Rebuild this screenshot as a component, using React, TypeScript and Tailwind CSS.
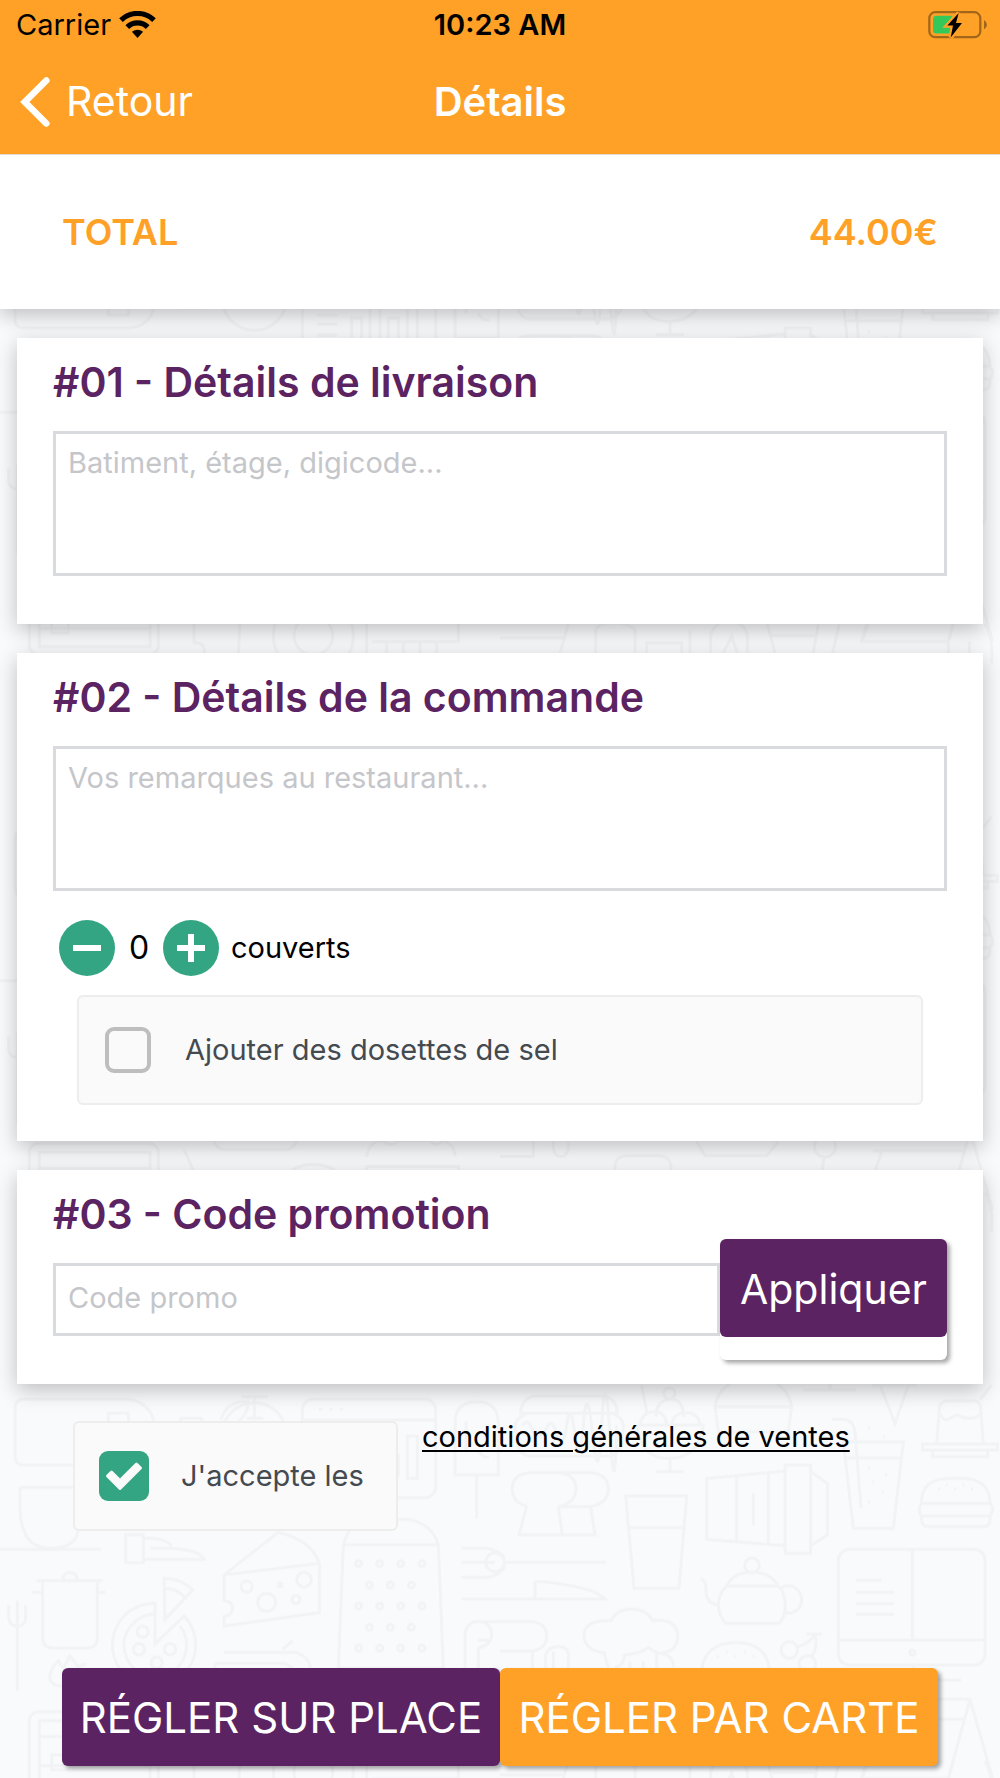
import React, { useState } from 'react';

const DOT_ROWS = [
  { y: 581, xs: [1076, 1139, 1202, 1266] },
  { y: 645, xs: [1108, 1171, 1234] },
  { y: 708, xs: [1076, 1139, 1202, 1266] },
  { y: 772, xs: [1108, 1171, 1234] },
  { y: 834, xs: [1076, 1139, 1202, 1266] },
];

// One tile of the kitchen doodles, left and right halves
function FoodDoodles() {
  return (
    <g fill="none" stroke="#f2f3f5" strokeWidth="9">
      <g transform="translate(0 233) scale(0.33333)">
        <path d="M45 115Q45 87 72 87H385Q450 95 465 165V215Q450 280 390 285H72Q45 285 45 260Z" />
        <path d="M325 130H385V246H325ZM542 145H605V225H542Z" />
        <circle cx="763" cy="195" r="97" />
        <path d="M725 80H803M763 80V150M740 145H790M663 150Q680 90 745 95Q745 130 715 155" />
        <rect x="907" y="87" width="400" height="296" rx="32" />
        <path d="M907 150H1307M950 246H1012M950 274H1012M950 306H1012M1055 320V255H1085V320M1110 198V325M1140 198V325M1165 320V255H1195V320M1222 198H1252V325H1222Z" />
        <path d="M957 118H965M989 118H997M1021 118H1029" />
        <path d="M1365 315V160Q1365 95 1430 95T1495 160V315ZM1430 315V445M1398 155V240M1435 240Q1445 265 1468 260" />
        <path d="M60 352H230M60 352V420Q65 535 150 535T235 470M0 538H303" />
        <path d="M377 495H430V578H377ZM430 505Q490 500 515 527M452 535H515Q600 540 612 568H430" />
        <path d="M672 615L835 487Q935 510 958 580V728L672 768V740Q698 735 698 715T672 692V615L958 580" />
        <circle cx="740" cy="650" r="17" />
        <circle cx="800" cy="697" r="27" />
        <circle cx="912" cy="629" r="22" />
        <circle cx="888" cy="688" r="12" />
        <circle cx="840" cy="645" r="6" />
        <path d="M1015 895L1030 525Q1050 448 1110 448H1230Q1300 465 1315 525L1330 895ZM1030 525H1315" />
        {DOT_ROWS.map((row) =>
          row.xs.map((x) => <circle key={`${x}-${row.y}`} cx={x} cy={row.y} r="9" />)
        )}
        <path d="M128 632V805Q130 834 158 834H263Q292 832 292 805V632M110 632H308M97 667H128M292 667H316M188 632Q188 608 210 608T232 632" />
        <path d="M26 705V740Q26 768 52 768T77 740V705M52 692V962" />
        <path d="M465 700A125 125 0 1 0 552 738L465 822ZM465 732A94 94 0 1 0 540 768" />
        <circle cx="428" cy="785" r="17" />
        <circle cx="417" cy="838" r="17" />
        <circle cx="470" cy="878" r="17" />
        <circle cx="510" cy="838" r="17" />
        <path d="M492 625Q545 625 578 660L495 748ZM492 655Q530 655 555 682" />
        <path d="M185 948Q145 945 150 915Q155 890 175 873L190 895L210 858L235 890L260 880" />
        <path d="M672 848H890Q925 860 932 892M645 880H850Q870 885 880 900M645 880V950M848 838L878 812" />
        <rect x="88" y="1025" width="387" height="240" rx="28" />
        <path d="M118 1052H450V1241H118ZM118 1100H450M118 1187H450M155 1155H205V1200H155Z" />
        <path d="M552 1045L582 1110V1230Q620 1225 612 1270M720 1160L715 1270M640 1008Q645 1040 670 1045H860Q885 1040 895 1008" />
        <circle cx="940" cy="1208" r="58" />
        <circle cx="940" cy="1208" r="120" />
        <path d="M1100 1065Q1110 1015 1150 1018Q1175 1040 1195 1018H1290Q1310 1040 1330 1018Q1365 1030 1365 1065M1100 1270V1095H1375V1226H1115M1160 1226V1270M1210 1226V1270M1260 1226V1270M1310 1226V1270" />
        <path d="M1385 535H1465Q1500 545 1515 565M1385 577H1485M1385 622H1465Q1500 615 1515 590M1385 687H1500" />
        <path d="M1395 895V800Q1395 755 1435 755T1475 800Q1470 825 1435 835V895M1435 755H1600M1435 810H1465" />
      </g>
      <g transform="translate(500 233) scale(0.33333)">
        <path d="M62 130Q65 78 110 78H310Q350 85 352 130ZM62 210Q45 195 45 170T80 130H335Q370 140 370 170T350 210" />
        <path d="M68 165Q85 145 95 175T120 195T145 165T172 195T200 165T225 195T250 165T278 195T305 165T330 195T350 165M50 215Q60 258 90 258H330Q360 250 368 215" />
        <circle cx="508" cy="70" r="17" />
        <path d="M468 140Q470 90 510 88T550 140M420 165Q425 128 460 125T500 165M515 165Q520 128 558 128T600 165M412 165H610Q600 262 510 265T412 165M510 265V305M468 305H552M425 45L440 125" />
        <path d="M645 110Q655 35 760 15Q865 35 875 110ZM645 110L655 185H865L875 110M910 60H1068M990 40V60" />
        <path d="M1140 45L1185 160L1225 45M1115 45H1250" />
        <path d="M1310 220L1318 115Q1320 92 1345 92H1425Q1442 95 1442 115L1450 220M1320 130Q1330 158 1350 145T1380 138T1410 145T1442 130M1440 90L1475 45M1268 222H1492V240H1268ZM1298 240H1463V260H1298Z" />
        <path d="M37 357Q37 312 88 308H180Q228 315 228 357T175 410H272Q325 400 325 357T275 308H180M80 408Q37 398 37 357M80 408L57 495H285L272 410M175 410L187 495" />
        <path d="M377 378H560L537 655H402ZM388 473H553" />
        <path d="M620 325L855 303V527L620 508ZM710 316V515M805 308V522M855 285H932V550H855ZM932 305L982 340V495L932 527M760 368V465" />
        <path d="M1030 215H1210L1180 475H1060ZM1040 263H1202M995 148H1030Q1060 150 1065 185L1083 415" />
        <path d="M1104 295H1110M1155 315H1161M1115 335H1121M1145 365H1151M1104 395H1110M1104 175H1110M1150 200H1156" />
        <path d="M1265 400Q1262 328 1345 325H1395Q1470 330 1470 400ZM1265 400Q1250 418 1265 438H1470Q1485 418 1470 400M1265 438V450Q1265 470 1285 470H1450Q1470 470 1470 450V438" />
        <path d="M1315 357H1321M1337 345H1343M1363 357H1369M1387 345H1393M1413 357H1419" />
        <circle cx="-15" cy="577" r="28" />
        <path d="M15 577H318M0 687H315Q290 660 200 645T105 638V687" />
        <path d="M0 755H95Q140 760 140 798T95 843H0M97 843V895M137 895V855Q145 830 175 830T205 855V895M160 895V845" />
        <path d="M325 892Q315 860 312 848Q252 840 252 795T333 752Q350 717 395 717T458 752Q533 745 533 797T475 850L445 833Q425 850 372 855Q375 885 345 892M475 850Q520 850 520 892M390 875V895M430 875V895M470 850V895" />
        <circle cx="756" cy="586" r="22" />
        <path d="M680 648Q700 606 756 606T835 648ZM680 648Q655 670 655 710Q660 745 678 760H838Q855 740 856 710Q855 665 835 648M840 655Q860 642 880 650Q905 665 905 690T880 727Q865 732 852 725M602 627Q618 630 618 655Q615 700 655 705" />
        <path d="M605 895Q620 818 708 818T808 895M650 860H656M677 845H683M703 860H709M732 845H738M758 860H764" />
        <circle cx="868" cy="840" r="25" />
        <circle cx="922" cy="882" r="25" />
        <path d="M893 830Q930 820 945 792M920 792H965M945 792Q955 830 935 860" />
        <rect x="1015" y="538" width="440" height="347" rx="32" />
        <path d="M1237 538V810M1015 810H1455M1068 631H1145M1068 667H1182M1068 701H1182M1068 733H1182" />
        <circle cx="1237" cy="848" r="8" />
        <path d="M1240 885V930M1090 930H1383M1120 988H1410L1345 1225M1410 988L1478 1225M1120 1048H1395M1145 1050L1090 1215" />
        <path d="M0 1065H100V1020M160 1020V1040Q165 1065 183 1065T205 1040V1020M590 1020L615 1063H800L835 1020M345 1120V1090Q350 1063 380 1063H480Q510 1066 513 1095V1120" />
        <circle cx="975" cy="1035" r="32" />
        <path d="M972 1067L965 1120" />
        <path d="M0 1215H190M205 1173L180 1260M287 1260V1190Q300 1168 345 1170T405 1190V1260M440 1260V1230H545V1260M570 1260V1190M632 1260V1205Q645 1165 688 1165T742 1205V1260M670 1260L695 1210L712 1260M802 1173L825 1260M815 1208H945M955 1173L940 1260M1018 1173L998 1260M1100 1173L1085 1225H1345L1360 1173M1345 1225V1260M1408 1225V1260M1455 1173Q1480 1215 1475 1290" />
      </g>
    </g>
  );
}

function Background() {
  return (
    <svg className="absolute inset-0 -z-10 h-full w-full" aria-hidden="true">
      <defs>
        <pattern id="doodles" width="1000" height="568.5" patternUnits="userSpaceOnUse">
          <FoodDoodles />
          <g transform="translate(0 -568.5)">
            <FoodDoodles />
          </g>
        </pattern>
      </defs>
      <rect width="100%" height="100%" fill="#f9fafc" />
      <rect width="100%" height="100%" fill="url(#doodles)" />
    </svg>
  );
}

function WifiIcon() {
  return (
    <svg width="37" height="28" viewBox="0 0 37 28" fill="none" stroke="#000" strokeWidth="5.2" aria-hidden="true">
      <path d="M2 9.2A23.6 23.6 0 0 1 35 9.2" />
      <path d="M8.3 16.1A14.4 14.4 0 0 1 28.7 16.1" />
      <path d="M12.9 20.8Q18.5 16.8 24.1 20.8L18.5 27Z" fill="#000" stroke="none" />
    </svg>
  );
}

function BatteryIcon() {
  return (
    <svg width="60" height="28" viewBox="0 0 60 28" aria-hidden="true">
      <rect x="1.3" y="1.2" width="51" height="25" rx="6" fill="none" stroke="#a1661a" strokeWidth="2.2" />
      <path d="M56 9Q59 11 59 13.8T56 18.5Z" fill="#a1661a" />
      <rect x="5" y="4.8" width="21" height="17.8" rx="3.5" fill="#34c759" />
      <path d="M30.7 2L19.3 14.6H25L22.7 26.5L34 12H28Z" fill="#ffa126" stroke="#ffa126" strokeWidth="4.5" />
      <path d="M30.7 2L19.3 14.6H25L22.7 26.5L34 12H28Z" fill="#000" />
    </svg>
  );
}

interface CardProps {
  title: string;
  className?: string;
  children: React.ReactNode;
}

function Card({ title, className = '', children }: CardProps) {
  return (
    <section className={`bg-white px-9 pt-5 shadow-[0_6px_20px_rgba(0,0,0,0.24)] ${className}`}>
      <h2 className="mb-[25px] text-[41px] leading-[48px] font-semibold text-[#5c2362]">{title}</h2>
      {children}
    </section>
  );
}

interface CheckProps {
  label: string;
  checked: boolean;
  onChange: (value: boolean) => void;
}

function Check({ label, checked, onChange }: CheckProps) {
  return (
    <label className="flex h-[110px] cursor-pointer items-center gap-8 rounded-md border-2 border-[#ededed] bg-[#fafafa] px-6 text-[29px] text-[#444a50]">
      <span className="relative flex size-[50px] items-center justify-center">
        <input
          type="checkbox"
          checked={checked}
          onChange={(e) => onChange(e.target.checked)}
          className="size-[46px] appearance-none rounded-[9px] border-4 border-[#bebebe] checked:size-[50px] checked:border-0 checked:bg-[#33a583]"
        />
        {checked && (
          <svg className="pointer-events-none absolute inset-0" viewBox="0 0 50 50" aria-hidden="true">
            <path
              d="M8.5 25L12.5 21L21 29.5L37.5 13L41.5 17L21 37.5Z"
              fill="#fafafa"
              stroke="#fafafa"
              strokeWidth="3"
              strokeLinejoin="round"
            />
          </svg>
        )}
      </span>
      {label}
    </label>
  );
}

const fieldClass =
  'block w-full resize-none border-[3px] border-[#d9dade] bg-white px-3 text-[29px] leading-9 text-black placeholder:text-[#c5c6ca] outline-none';

export default function App() {
  const [covers, setCovers] = useState(0);
  const [salt, setSalt] = useState(false);
  const [accepted, setAccepted] = useState(true);

  return (
    <div className="relative isolate flex min-h-screen flex-col font-['Inter',sans-serif] text-black">
      <Background />

      <header className="relative z-10 border-b border-[#e0dcd6] bg-[#ffa126]">
        <div className="grid h-[50px] grid-cols-3 items-center px-4 text-[29px]">
          <div className="flex items-center gap-2">
            Carrier <WifiIcon />
          </div>
          <div className="text-center font-semibold">10:23 AM</div>
          <div className="-mr-1 flex justify-end">
            <BatteryIcon />
          </div>
        </div>
        <div className="grid h-[104px] grid-cols-3 items-center px-5 text-[41px] text-white">
          <button type="button" className="flex items-center gap-4">
            <svg width="30" height="50" viewBox="0 0 30 50" fill="none" aria-hidden="true">
              <path d="M26.3 3.5L4.8 25L26.3 46.5" stroke="#fff" strokeWidth="6.6" strokeLinecap="round" />
            </svg>
            Retour
          </button>
          <h1 className="text-center text-[40px] font-semibold">Détails</h1>
        </div>
      </header>

      <div className="flex h-[154px] items-center justify-between bg-white px-[62px] text-[36px] font-semibold text-[#ffa126] shadow-[0_6px_20px_rgba(0,0,0,0.24)]">
        <span>TOTAL</span>
        <span>44.00€</span>
      </div>

      <main className="mt-[29px] flex flex-col gap-[29px] px-[17px]">
        <Card title="#01 - Détails de livraison" className="pb-12">
          <textarea aria-label="Détails de livraison" placeholder="Batiment, étage, digicode..." className={`${fieldClass} h-[145px] pt-[11px]`} />
        </Card>

        <Card title="#02 - Détails de la commande" className="pb-9">
          <textarea aria-label="Détails de la commande" placeholder="Vos remarques au restaurant..." className={`${fieldClass} h-[145px] pt-[11px]`} />
          <div className="mt-[29px] mb-[19px] flex items-center px-1.5">
            <button
              type="button"
              aria-label="Moins"
              onClick={() => setCovers(Math.max(0, covers - 1))}
              className="flex size-14 items-center justify-center rounded-full bg-[#33a583]"
            >
              <svg width="30" height="30" viewBox="0 0 30 30" stroke="#fff" strokeWidth="6" aria-hidden="true">
                <path d="M1 15H29" />
              </svg>
            </button>
            <span className="w-12 text-center text-[32px]">{covers}</span>
            <button
              type="button"
              aria-label="Plus"
              onClick={() => setCovers(covers + 1)}
              className="flex size-14 items-center justify-center rounded-full bg-[#33a583]"
            >
              <svg width="30" height="30" viewBox="0 0 30 30" stroke="#fff" strokeWidth="6" aria-hidden="true">
                <path d="M1 15H29M15 1V29" />
              </svg>
            </button>
            <span className="ml-3 text-[29px]">couverts</span>
          </div>
          <div className="px-6">
            <Check label="Ajouter des dosettes de sel" checked={salt} onChange={setSalt} />
          </div>
        </Card>

        <Card title="#03 - Code promotion" className="pb-6">
          <div className="flex items-start">
            <input type="text" aria-label="Code promotion" placeholder="Code promo" className={`${fieldClass} h-[73px] min-w-0 flex-1 pb-1`} />
            <div className="-mt-6 rounded-md bg-white pb-[23px] shadow-[3px_3px_4px_rgba(0,0,0,0.35)]">
              <button type="button" className="h-[98px] w-[227px] rounded-md bg-[#5c2362] pt-1 text-[41px] text-white">
                Appliquer
              </button>
            </div>
          </div>
        </Card>
      </main>

      <div className="mt-[37px] flex items-start gap-6 px-[73px]">
        <div className="w-[325px]">
          <Check label="J'accepte les" checked={accepted} onChange={setAccepted} />
        </div>
        <a href="#cgv" className="text-[29px] leading-8 underline decoration-2 underline-offset-3">
          conditions générales de ventes
        </a>
      </div>

      <div className="mt-auto grid grid-cols-2 px-[62px] pt-8 pb-3 text-[42px] text-white">
        <button type="button" className="h-[98px] rounded-md bg-[#5c2362] shadow-[3px_3px_4px_rgba(0,0,0,0.35)]">
          RÉGLER SUR PLACE
        </button>
        <button type="button" className="h-[98px] rounded-md bg-[#ffa126] shadow-[3px_3px_4px_rgba(0,0,0,0.35)]">
          RÉGLER PAR CARTE
        </button>
      </div>
    </div>
  );
}
